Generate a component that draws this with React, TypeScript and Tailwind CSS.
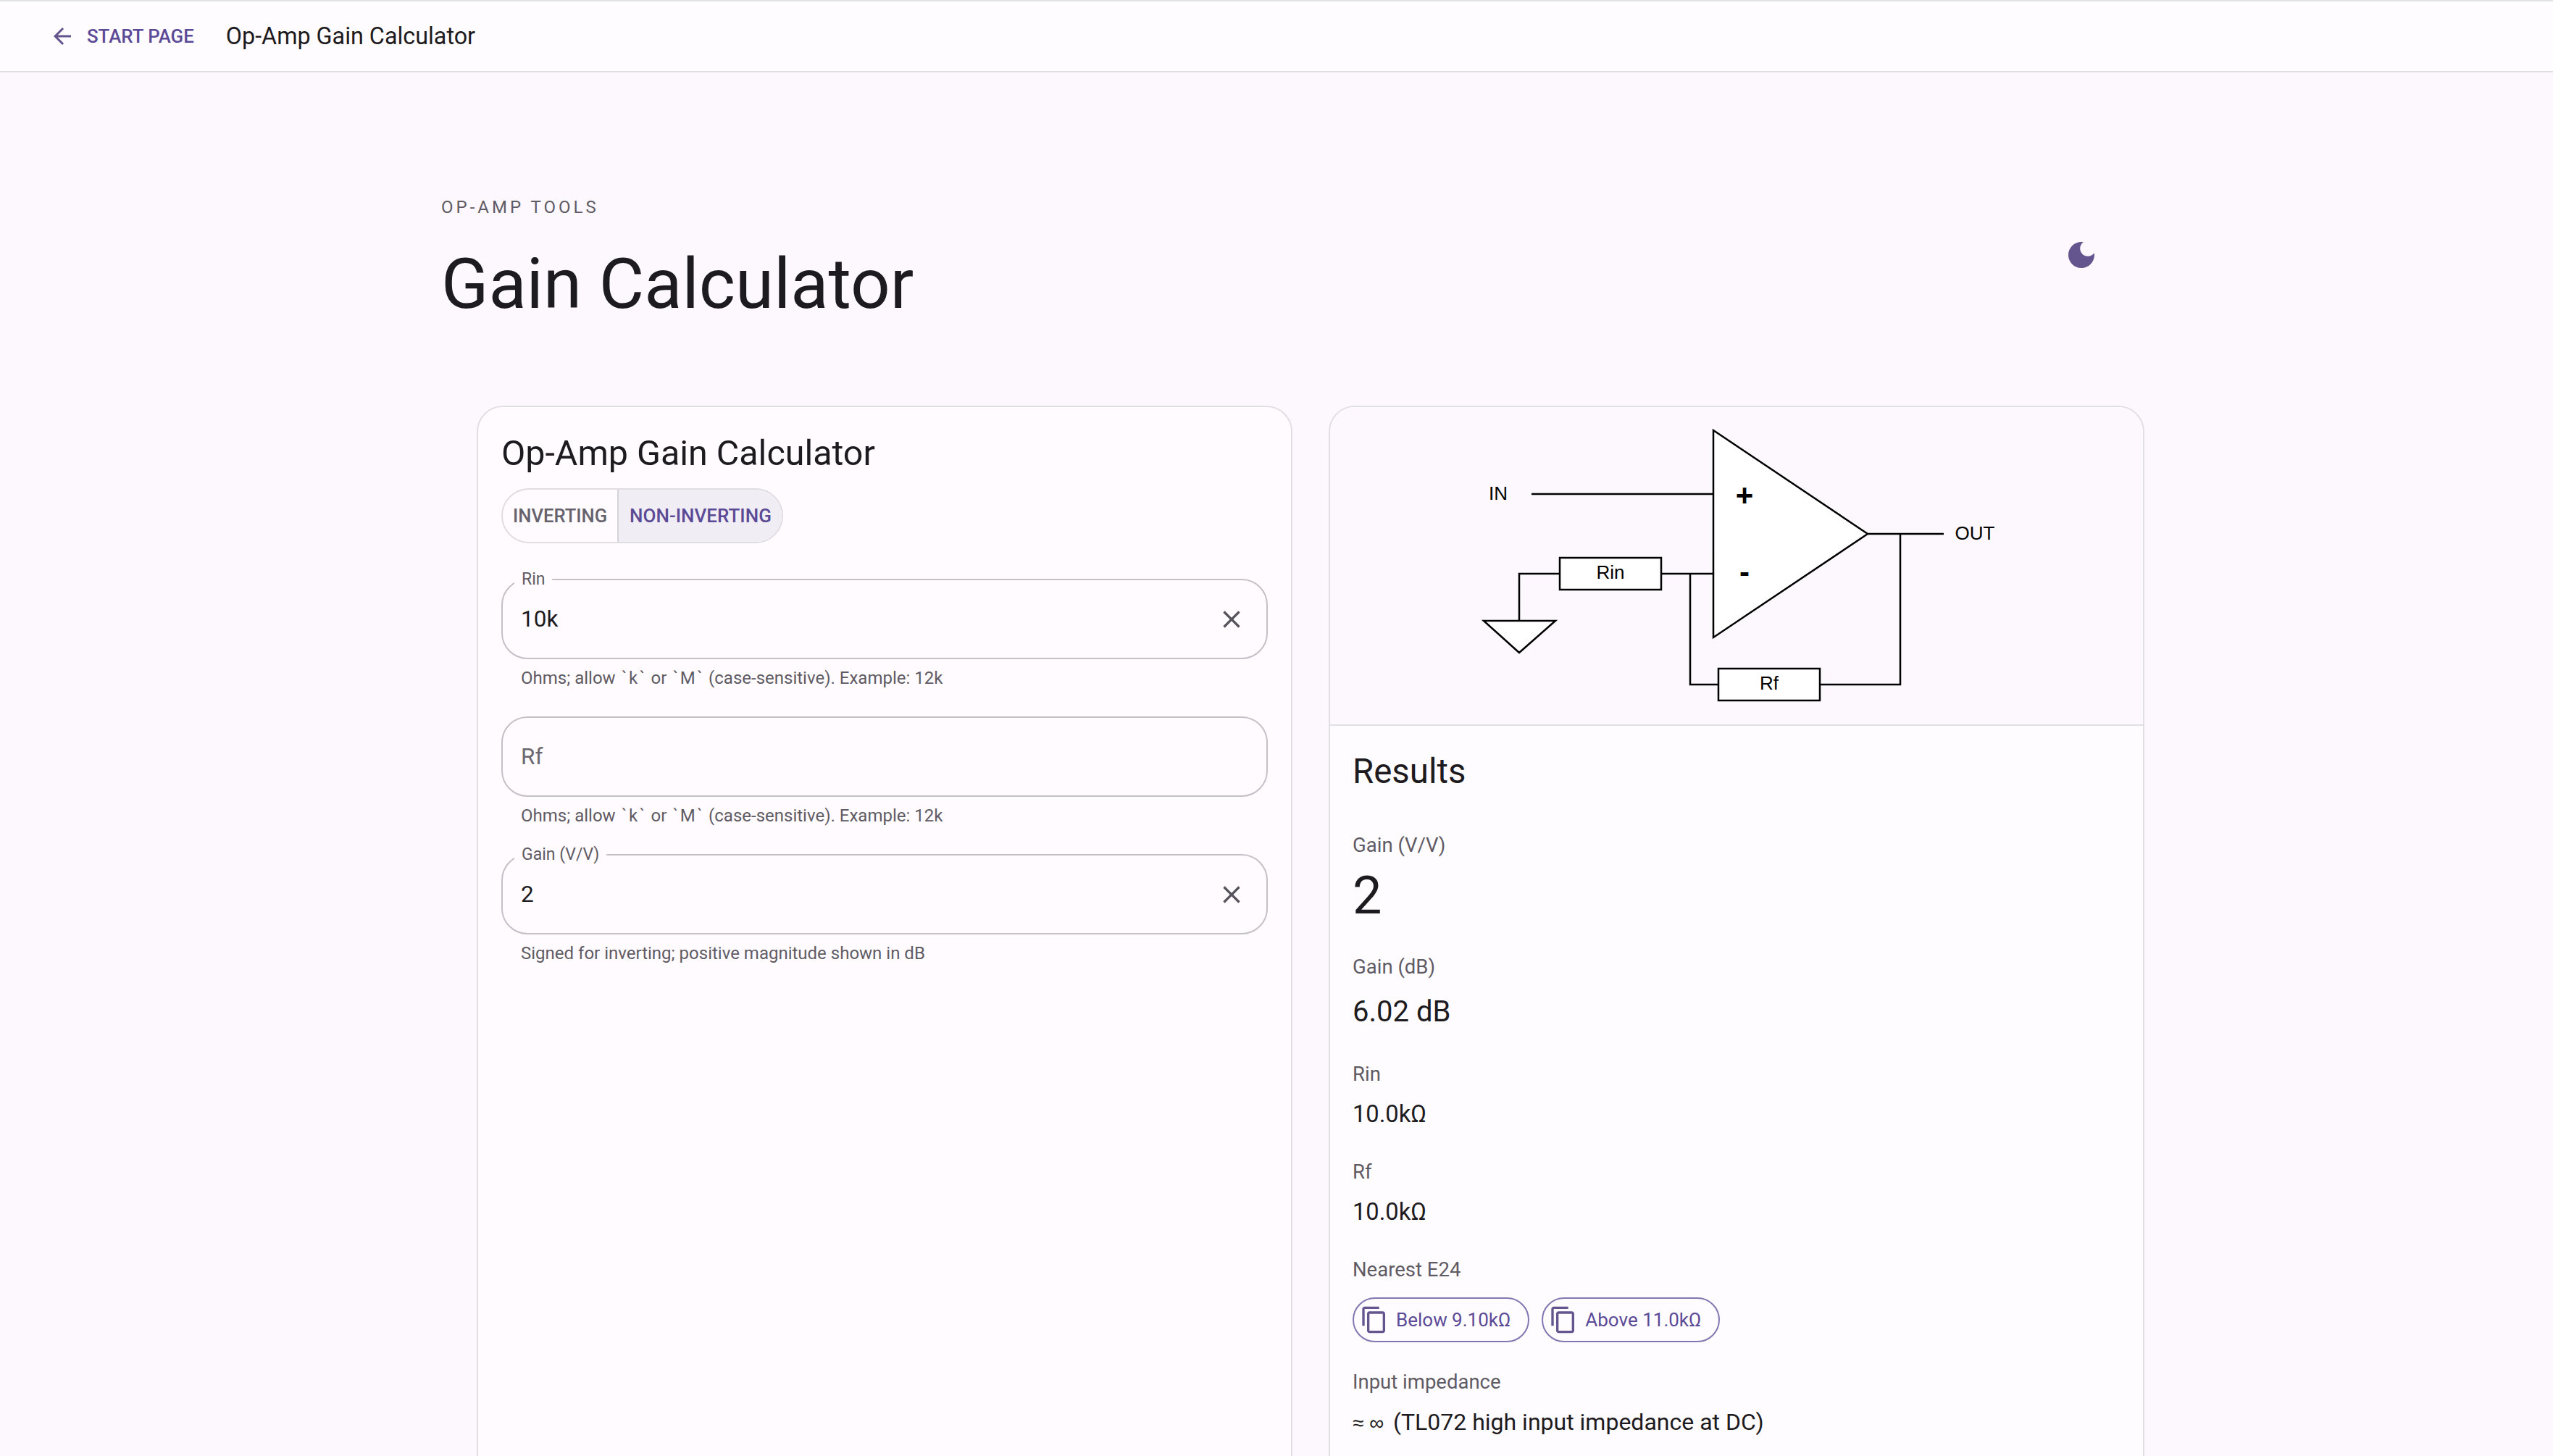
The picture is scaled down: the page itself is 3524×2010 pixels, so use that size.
import { useState, type ReactNode } from "react"

const COPY = "M16 1H4c-1.1 0-2 .9-2 2v14h2V3h12V1zm3 4H8c-1.1 0-2 .9-2 2v14c0 1.1.9 2 2 2h11c1.1 0 2-.9 2-2V7c0-1.1-.9-2-2-2zm0 16H8V7h11v14z"
const CLOSE = "M19 6.41L17.59 5 12 10.59 6.41 5 5 6.41 10.59 12 5 17.59 6.41 19 12 13.41 17.59 19 19 17.59 13.41 12z"
const BACK = "M20 11H7.83l5.59-5.59L12 4l-8 8 8 8 1.41-1.41L7.83 13H20v-2z"
const MOON = "M12 3c-4.97 0-9 4.03-9 9s4.03 9 9 9 9-4.03 9-9c0-.46-.04-.92-.1-1.36-.98 1.37-2.58 2.26-4.4 2.26-2.98 0-5.4-2.42-5.4-5.4 0-1.81.89-3.42 2.26-4.4-.44-.06-.9-.1-1.36-.1z"

function Icon({ d, className }: { d: string; className: string }) {
  return (
    <svg viewBox="0 0 24 24" fill="currentColor" className={className}>
      <path d={d} />
    </svg>
  )
}

function Tick() {
  return <span className="mx-[2.5px]">`</span>
}

function OhmsHelp() {
  return (
    <>
      Ohms; allow <Tick />k<Tick /> or <Tick />M<Tick /> (case-sensitive). Example: 12k
    </>
  )
}

function TextField({ label, value, children, className }: { label: string; value: string; children: ReactNode; className: string }) {
  const [text, setText] = useState(value)
  return (
    <div className={className}>
      <div className="relative flex h-[111px] items-center rounded-[36px] border-2 border-[#c4c0c8] pl-[25px] pr-[28px]">
        {text ? (
          <span className="absolute left-[16px] top-[-15px] bg-[#fffbff] px-[10px] text-[23px] leading-[28px] text-[#5f5b64]">
            {label}
          </span>
        ) : null}
        <input
          value={text}
          placeholder={label}
          onChange={(e) => setText(e.target.value)}
          className="min-w-0 flex-1 bg-transparent text-[31.5px] text-[#1d1b20] outline-none placeholder:text-[#6b6770]"
        />
        {text ? (
          <button type="button" aria-label="Clear" onClick={() => setText("")} className="flex text-[#56525b]">
            <Icon d={CLOSE} className="h-[40px] w-[40px]" />
          </button>
        ) : null}
      </div>
      <p className="mt-[10px] pl-[27px] text-[24px] leading-[32px] text-[#5f5b64]">{children}</p>
    </div>
  )
}

function Metric({ label, children, valueClass, className }: { label: string; children: ReactNode; valueClass: string; className: string }) {
  return (
    <div className={className}>
      <p className="text-[27.5px] leading-[36px] text-[#5f5b64]">{label}</p>
      <p className={`text-[#1d1b20] ${valueClass}`}>{children}</p>
    </div>
  )
}

function Chip({ label }: { label: string }) {
  return (
    <button
      type="button"
      className="flex h-[62px] items-center gap-[10px] rounded-full border-2 border-[#8277b0] pl-[8px] pr-[24px] text-[26px] text-[#5b4a96]"
    >
      <Icon d={COPY} className="h-[40px] w-[40px] text-[#65558f]" />
      {label}
    </button>
  )
}

function Schematic() {
  return (
    <svg viewBox="1836 562 1122 438" className="block h-[438px] w-full" fill="none" stroke="#000" strokeWidth="2.5">
      <path d="M2114 682H2365M2578 737H2683M2623 737V945H2512M2372 945H2333V792M2293 792H2365M2153 792H2097V857" />
      <path d="M2365 594L2578 737L2365 880Z" fill="#fff" />
      <rect x="2153" y="770" width="140" height="44" fill="#fff" />
      <rect x="2372" y="923" width="140" height="44" fill="#fff" />
      <path d="M2048 857H2147L2097 901Z" fill="#fff" />
      <g fill="#000" stroke="none" fontFamily="'Liberation Sans', Arial, sans-serif" fontSize="26" textAnchor="middle">
        <text x="2068" y="690">IN</text>
        <text x="2726" y="745">OUT</text>
        <text x="2223" y="799">Rin</text>
        <text x="2442" y="952">Rf</text>
        <text x="2408" y="698" fontSize="42" fontWeight="700">+</text>
        <text x="2408" y="804" fontSize="42" fontWeight="700">-</text>
      </g>
    </svg>
  )
}

export default function App() {
  const [mode, setMode] = useState("non")

  return (
    <div className="h-[2010px] overflow-hidden bg-[#fcf8fe] font-['Roboto',sans-serif]">
      <header className="flex h-[100px] items-center border-y-2 border-t-[#e2e2e0] border-b-[#e2dfe4] bg-[#fffcff]">
        <a className="ml-[68px] flex items-center gap-[16px] text-[25.8px] font-medium text-[#5b4a96]" href="#">
          <Icon d={BACK} className="h-[36px] w-[36px] text-[#65558f]" />
          START PAGE
        </a>
        <h1 className="ml-[44px] text-[32.3px] text-[#1d1b20]">Op-Amp Gain Calculator</h1>
      </header>

      <div className="ml-[609px] mt-[170px] flex w-[2288px] items-center justify-between">
        <div>
          <p className="text-[24px] leading-[32px] tracking-[4px] text-[#5f5b64]">OP-AMP TOOLS</p>
          <h2 className="mt-[30px] text-[96px] leading-[120px] text-[#1d1b20]">Gain Calculator</h2>
        </div>
        <Icon d={MOON} className="mt-[-19px] h-[48px] w-[48px] text-[#65558f]" />
      </div>

      <div className="ml-[658px] mt-[108px] grid w-[2302px] grid-cols-2 gap-[50px]">
        <section className="h-[1600px] rounded-[36px] border-2 border-[#e2dfe4] bg-[#fffbff] px-[32px] pt-[32px]">
          <h3 className="text-[48.4px] leading-[64px] text-[#1d1b20]">Op-Amp Gain Calculator</h3>
          <div className="mt-[16px] flex h-[76px] w-fit rounded-full border-2 border-[#e0dce2] font-medium">
            <button
              type="button"
              onClick={() => setMode("inv")}
              className={`rounded-l-full px-[14px] text-[25.6px] ${mode === "inv" ? "bg-[#f1edf4] text-[#5b4a96]" : "text-[#66626c]"}`}
            >
              INVERTING
            </button>
            <button
              type="button"
              onClick={() => setMode("non")}
              className={`rounded-r-full border-l-2 border-[#d6d2da] pl-[15px] pr-[14px] text-[26px] ${mode === "non" ? "bg-[#f1edf4] text-[#5b4a96]" : "text-[#66626c]"}`}
            >
              NON-INVERTING
            </button>
          </div>
          <TextField className="mt-[49px]" label="Rin" value="10k"><OhmsHelp /></TextField>
          <TextField className="mt-[37px]" label="Rf" value=""><OhmsHelp /></TextField>
          <TextField className="mt-[37px]" label="Gain (V/V)" value="2">Signed for inverting; positive magnitude shown in dB</TextField>
        </section>

        <section className="h-[1600px] overflow-hidden rounded-[36px] border-2 border-[#e2dfe4] bg-[#fffcff]">
          <div className="border-b-2 border-[#e2dfe4] bg-[#fcf8fe]">
            <Schematic />
          </div>
          <div className="px-[31px]">
            <h3 className="mt-[31px] text-[47.4px] leading-[64px] text-[#1d1b20]">Results</h3>
            <Metric className="mt-[52px]" label="Gain (V/V)" valueClass="mt-[10px] text-[72px] leading-[84px]">2</Metric>
            <Metric className="mt-[38px]" label="Gain (dB)" valueClass="mt-[18px] text-[40px] leading-[52px]">6.02 dB</Metric>
            <Metric className="mt-[42px]" label="Rin" valueClass="mt-[15px] text-[32.7px] leading-[44px]">10.0kΩ</Metric>
            <Metric className="mt-[40px]" label="Rf" valueClass="mt-[15px] text-[32.7px] leading-[44px]">10.0kΩ</Metric>
            <p className="mt-[40px] text-[27.5px] leading-[36px] text-[#5f5b64]">Nearest E24</p>
            <div className="mt-[20px] flex gap-[17px]">
              <Chip label="Below 9.10kΩ" />
              <Chip label="Above 11.0kΩ" />
            </div>
            <Metric className="mt-[37px]" label="Input impedance" valueClass="mt-[15px] text-[32px] leading-[44px]">
              <span className="inline-block w-[56px] font-['Liberation_Sans',sans-serif] text-[28px]">≈ ∞</span>
              (TL072 high input impedance at DC)
            </Metric>
          </div>
        </section>
      </div>
    </div>
  )
}
